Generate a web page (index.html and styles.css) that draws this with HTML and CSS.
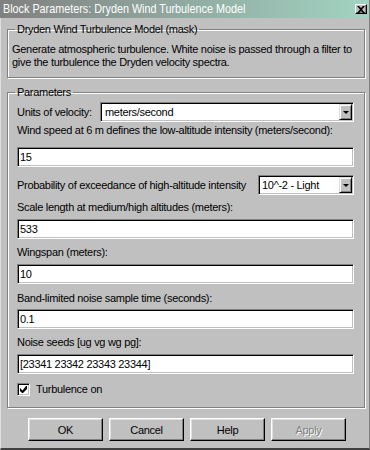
FILE: index.html
```html
<!DOCTYPE html>
<html>
<head>
<meta charset="utf-8">
<link rel="stylesheet" href="styles.css">
</head>
<body>
<div class="window">
  <div class="titlebar">
    <span class="title">Block Parameters: Dryden Wind Turbulence Model</span>
    <span class="close"><svg width="8" height="7" viewBox="0 0 8 7"><path d="M0 0h2l2 2 2-2h2L5 3.5 8 7H6L4 5 2 7H0l3-3.5z" fill="#000"/></svg></span>
  </div>
  <fieldset class="group desc">
    <legend>Dryden Wind Turbulence Model (mask)</legend>
    <p>Generate atmospheric turbulence. White noise is passed through a filter to give the turbulence the Dryden velocity spectra.</p>
  </fieldset>
  <fieldset class="group params">
    <legend>Parameters</legend>
    <div class="row r-units">
      <span class="lbl">Units of velocity:</span>
      <div class="select wide"><span class="val">meters/second</span><span class="arrow"><i></i></span></div>
    </div>
    <div class="lbl r-wind">Wind speed at 6 m defines the low-altitude intensity (meters/second):</div>
    <div class="edit e-wind">15</div>
    <div class="row r-prob">
      <span class="lbl">Probability of exceedance of high-altitude intensity</span>
      <div class="select narrow"><span class="val">10^-2 - Light</span><span class="arrow"><i></i></span></div>
    </div>
    <div class="lbl r-scale">Scale length at medium/high altitudes (meters):</div>
    <div class="edit e-scale">533</div>
    <div class="lbl r-wing">Wingspan (meters):</div>
    <div class="edit e-wing">10</div>
    <div class="lbl r-band">Band-limited noise sample time (seconds):</div>
    <div class="edit e-band">0.1</div>
    <div class="lbl r-seed">Noise seeds [ug vg wg pg]:</div>
    <div class="edit e-seed">[23341 23342 23343 23344]</div>
    <div class="check">
      <span class="box"><svg width="7" height="7" viewBox="0 0 7 7"><path d="M6 0h1v3L3 7H2L0 5V2l2.5 2.5z" fill="#000"/></svg></span>
      <span class="lbl">Turbulence on</span>
    </div>
  </fieldset>
  <div class="buttons">
    <div class="btn">OK</div>
    <div class="btn">Cancel</div>
    <div class="btn">Help</div>
    <div class="btn disabled">Apply</div>
  </div>
</div>
</body>
</html>
```

FILE: styles.css
```css
html, body {
  margin: 0;
  padding: 0;
  background: #c0c0c0;
}
.window {
  width: 370px;
  height: 450px;
  box-sizing: border-box;
  background: #c0c0c0;
  border-left: 1px solid #dfdfdf;
  border-right: 1px solid #808080;
  border-bottom: 2px solid #404040;
  font-family: "Liberation Sans", Arial, sans-serif;
  font-size: 11px;
  letter-spacing: -0.3px;
  color: #000;
  display: flex;
  flex-direction: column;
}
.titlebar {
  height: 18px;
  flex: none;
  margin-left: -1px;
  background: linear-gradient(to right, #808080, #a2d4c2);
  display: flex;
  align-items: center;
  justify-content: space-between;
  padding: 0 2px 0 3px;
  overflow: hidden;
}
.title {
  color: #fff;
  font-size: 13px;
  letter-spacing: 0;
  line-height: 18px;
  white-space: nowrap;
  display: inline-block;
  transform: scaleX(0.83);
  transform-origin: left center;
}
.close {
  width: 12px;
  height: 10px;
  flex: none;
  box-sizing: border-box;
  background: #c0c0c0;
  border-top: 1px solid #fff;
  border-left: 1px solid #fff;
  border-right: 1px solid #000;
  border-bottom: 1px solid #000;
  box-shadow: inset -1px -1px 0 #808080;
  display: flex;
  align-items: center;
  justify-content: center;
}
.group {
  flex: none;
  width: 358px;
  box-sizing: border-box;
  margin: 0 0 0 6px;
  border: 1px solid #808080;
  box-shadow: inset 1px 1px 0 #fff, 1px 1px 0 #fff;
  min-width: 0;
}
.group legend {
  padding: 0 2px;
  line-height: 14px;
}
.desc {
  margin-top: 4px;
  padding: 0 3px 8px 4px;
}
.desc legend {
  margin-left: 3px;
}
.desc p {
  margin: 7px 0 0 0;
  line-height: 13px;
}
.params {
  margin-top: 7px;
  padding: 0 10px 11px 9px;
  display: flex;
  flex-direction: column;
}
.params legend {
  margin-left: -2px;
}
.lbl {
  white-space: nowrap;
  line-height: 14px;
}
.row {
  display: flex;
  align-items: center;
  justify-content: space-between;
}
.r-units { margin-top: 3px; }
.r-wind { margin-top: 1px; }
.e-wind { margin-top: 10px; }
.r-prob { margin-top: 8px; }
.r-scale { margin-top: 5px; }
.e-scale { margin-top: 5px; }
.r-wing { margin-top: 6px; }
.e-wing { margin-top: 5px; }
.r-band { margin-top: 7px; }
.e-band { margin-top: 4px; }
.r-seed { margin-top: 6px; }
.e-seed { margin-top: 5px; }
.edit, .select {
  box-sizing: border-box;
  height: 20px;
  background: #fff;
  border-top: 1px solid #808080;
  border-left: 1px solid #808080;
  border-right: 1px solid #fff;
  border-bottom: 1px solid #fff;
  box-shadow: inset 1px 1px 0 #000, inset -1px -1px 0 #c0c0c0;
}
.edit {
  padding: 0 0 0 2px;
  line-height: 18px;
}
.select {
  display: flex;
  align-items: stretch;
  padding: 1px;
}
.select .val {
  flex: 1;
  line-height: 16px;
  padding-left: 3px;
  white-space: nowrap;
}
.select.wide { width: 254px; }
.select.narrow { width: 96px; }
.select.narrow .val { padding-left: 2px; }
.arrow {
  width: 13px;
  flex: none;
  box-sizing: border-box;
  background: #c0c0c0;
  border-top: 1px solid #dfdfdf;
  border-left: 1px solid #dfdfdf;
  border-right: 1px solid #000;
  border-bottom: 1px solid #000;
  box-shadow: inset 1px 1px 0 #fff, inset -1px -1px 0 #808080;
  display: flex;
  align-items: center;
  justify-content: center;
}
.arrow i {
  width: 0;
  height: 0;
  border-left: 3px solid transparent;
  border-right: 3px solid transparent;
  border-top: 3px solid #000;
  margin-top: 1px;
}
.check {
  display: flex;
  align-items: center;
  margin-top: 8px;
}
.box {
  width: 13px;
  height: 13px;
  box-sizing: border-box;
  background: #fff;
  border-top: 1px solid #808080;
  border-left: 1px solid #808080;
  border-right: 1px solid #fff;
  border-bottom: 1px solid #fff;
  box-shadow: inset 1px 1px 0 #000, inset -1px -1px 0 #c0c0c0;
  display: flex;
  align-items: center;
  justify-content: center;
  margin-right: 6px;
}
.buttons {
  flex: none;
  display: flex;
  gap: 6px;
  margin: 10px 0 0 27px;
}
.btn {
  width: 75px;
  height: 23px;
  box-sizing: border-box;
  border-top: 1px solid #fff;
  border-left: 1px solid #fff;
  border-right: 1px solid #000;
  border-bottom: 1px solid #000;
  box-shadow: inset -1px -1px 0 #808080, inset 1px 1px 0 #dfdfdf;
  display: flex;
  align-items: center;
  justify-content: center;
}
.btn.disabled {
  color: #808080;
  text-shadow: 1px 1px 0 #fff;
}
```
